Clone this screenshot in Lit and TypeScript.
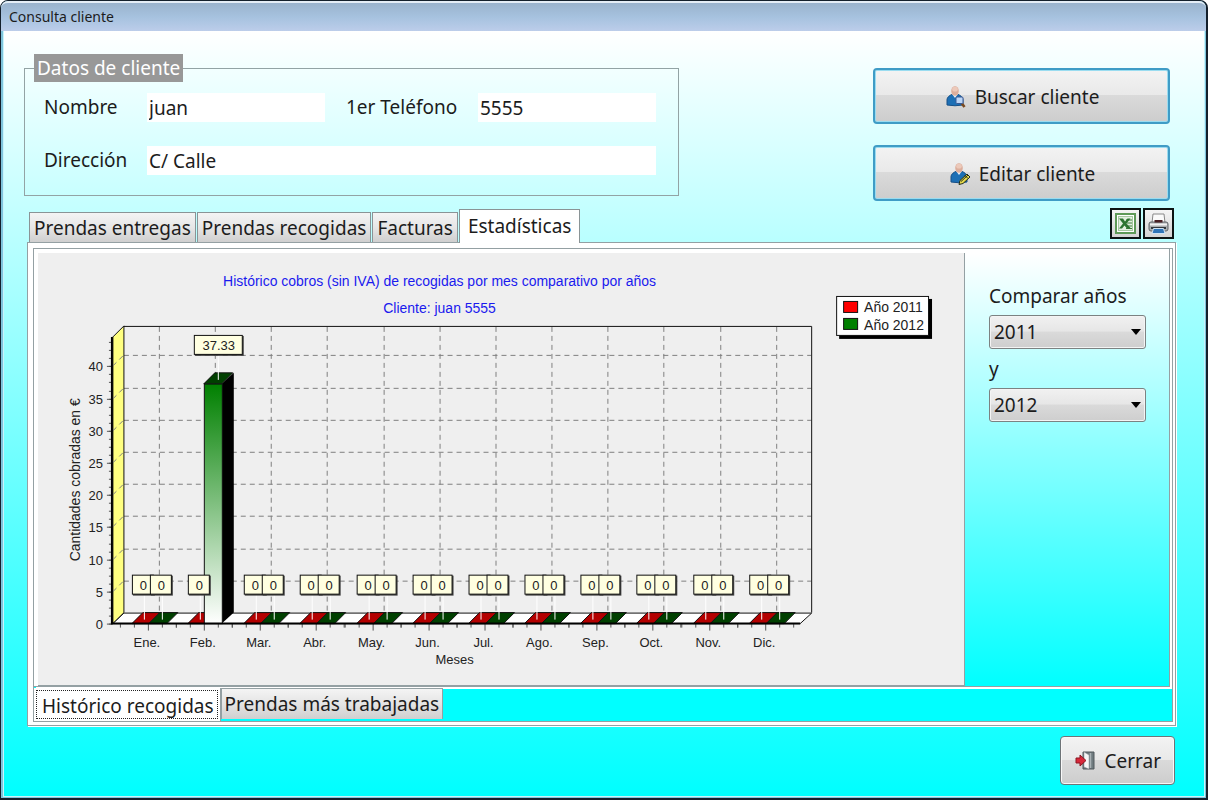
import { LitElement, html, css, svg } from "lit";
import { customElement, state } from "lit/decorators.js";

const MONTHS = ["Ene.", "Feb.", "Mar.", "Abr.", "May.", "Jun.", "Jul.", "Ago.", "Sep.", "Oct.", "Nov.", "Dic."];

interface Series {
  label: string;
  color: string;
  dark: string;
  values: number[];
}

const SERIES: Series[] = [
  { label: "Año 2011", color: "#ff0000", dark: "#b40000", values: MONTHS.map(() => 0) },
  { label: "Año 2012", color: "#008000", dark: "#004000", values: MONTHS.map((_, i) => (i === 1 ? 37.33 : 0)) },
];

@customElement("income-chart")
class IncomeChart extends LitElement {
  static styles = css`
    :host { display: block; background: #efefef; }
    svg { display: block; width: 100%; height: auto; }
    text { font-family: "Liberation Sans", Arial, sans-serif; font-size: 13px; fill: #222; }
    .title { fill: #1a1aee; font-size: 14px; }
    .large { font-size: 14px; }
    .mid { text-anchor: middle; }
    .end { text-anchor: end; }
    .axis { stroke: #000; stroke-width: 2; fill: none; }
    .edge { stroke: #111; fill: none; }
    .wall { fill: #ffff80; stroke: #111; }
    .floor { fill: #fff; stroke: #111; }
    .grid { stroke: #808080; stroke-dasharray: 5 4; fill: none; }
    .tick { stroke: #555; }
    .lead { stroke: #fff; stroke-width: 1; }
    .shadow { fill: #444; }
    .mark { fill: #ffffe1; stroke: #111; }
  `;

  private zeroY = 371;
  private depth = 11;

  private tickX(i: number) {
    return Math.round(110 + i * 56.16);
  }

  private valueY(v: number) {
    return Math.round(this.zeroY - v * 6.44);
  }

  private mark(x: number, y: number, w: number, label: string) {
    return svg`
      <rect class="shadow" x=${x + 1} y=${y + 1} width=${w + 1} height="20"></rect>
      <rect class="mark" x=${x + 0.5} y=${y + 0.5} width=${w} height="19"></rect>
      <text class="mid" x=${x + w / 2 + 1} y=${y + 15}>${label}</text>`;
  }

  private block(x: number, w: number, v: number, s: Series) {
    const top = this.valueY(v);
    const d = this.depth;
    const base = this.zeroY;
    return svg`
      ${v > 0
        ? svg`
          <polygon points="${x + w},${top} ${x + w + d + 1},${top - d} ${x + w + d + 1},${base - d} ${x + w},${base}" fill="#000"></polygon>
          <rect x=${x + 0.5} y=${top} width=${w} height=${base - top} fill="url(#bar)" stroke="#111"></rect>`
        : null}
      <polygon points="${x},${top} ${x + d},${top - d} ${x + w + d},${top - d} ${x + w},${top}"
        fill=${s.dark} stroke="#111"></polygon>`;
  }

  render() {
    const levels = [0, 5, 10, 15, 20, 25, 30, 35, 40];
    const minors = Array.from({ length: 36 }, (_, i) => i * 1.25);
    const d = this.depth;
    return html`
      <svg viewBox="0 0 927 432" role="img" aria-label="Histórico cobros">
        <defs>
          <linearGradient id="bar" x1="0" y1="0" x2="0" y2="1">
            <stop offset="0" stop-color="#008000"></stop>
            <stop offset="1" stop-color="#ffffff"></stop>
          </linearGradient>
        </defs>
        <text class="title mid" x="402" y="33">Histórico cobros (sin IVA) de recogidas por mes comparativo por años</text>
        <text class="title mid" x="402" y="60">Cliente: juan 5555</text>

        ${MONTHS.map((_, i) => svg`<path class="grid" d="M${this.tickX(i) + d + 0.5} 74V360"></path>`)}
        ${levels.slice(1).map((v) => svg`<path class="grid" d="M86 ${this.valueY(v) - d + 0.5}H774"></path>`)}
        <path class="edge" d="M86 73.5H774.5V360"></path>
        <polygon class="wall" points="75,84 86,73 86,360 75,371"></polygon>
        ${levels.slice(1).map((v) => svg`<path class="grid" d="M75 ${this.valueY(v)}l11 -11"></path>`)}
        <polygon class="floor" points="75,371 86,360.5 774.5,360.5 763,371"></polygon>

        ${minors.map((v) => svg`<path class="tick" d="M71 ${this.valueY(v) + 0.5}h3"></path>`)}
        ${levels.map((v) => svg`
          <path class="tick" d="M69 ${this.valueY(v) + 0.5}h6"></path>
          <text class="end" x="65" y=${this.valueY(v) + 5}>${v}</text>`)}
        ${MONTHS.map((m, i) => svg`
          ${[-28, -14, 14, 28].map((o) => svg`<path class="tick" d="M${this.tickX(i) + o + 0.5} 371v4"></path>`)}
          <path class="tick" d="M${this.tickX(i) + 0.5} 371v7"></path>
          <text class="mid" x=${this.tickX(i) - 1} y="394">${m}</text>`)}
        <path class="axis" d="M74 84V371"></path>

        ${MONTHS.map((_, i) => svg`
          ${this.block(this.tickX(i) - 16, 17, SERIES[0].values[i], SERIES[0])}
          ${this.block(this.tickX(i) + (i === 1 ? 0 : 1), 18, SERIES[1].values[i], SERIES[1])}`)}
        <path class="axis" d="M73 371H763"></path>

        ${MONTHS.map((_, i) => {
          const x = this.tickX(i);
          const v = SERIES[1].values[i];
          const top = this.valueY(v);
          return svg`
            <path class="lead" d="M${x - 3.5} 342v25"></path>
            ${this.mark(x - 16, 322, 21, "0")}
            <path class="lead" d="M${x + 14.5} ${top - 29}v25"></path>
            ${v > 0 ? this.mark(x - 10, 82, 48, String(v)) : this.mark(x + 2, 322, 21, "0")}`;
        })}

        <text class="mid" x="417" y="411">Meses</text>
        <text class="mid large" transform="translate(42 227) rotate(-90)">Cantidades cobradas en €</text>

        <rect x="802" y="46" width="93" height="40" fill="#000"></rect>
        <rect x="799.5" y="43.5" width="92" height="39" fill="#fff" stroke="#111"></rect>
        ${SERIES.map((s, i) => svg`
          <rect x="806.5" y=${48.5 + i * 17} width="14" height="11" fill=${s.color} stroke="#111"></rect>
          <text class="large" x="827" y=${59 + i * 18}>${s.label}</text>`)}
      </svg>
    `;
  }
}

const person = svg`
  <path d="M1 19v-5c0-3 3-5 6-6h4c3 1 6 3 6 6v5q-8 1.500-16 0z" fill="#1c6fb5" stroke="#174f86" stroke-width="1"></path>
  <path d="M6 8l3 4 3-4z" fill="#e8f0f8"></path>
  <ellipse cx="9" cy="5" rx="3.800" ry="4.800" fill="#dcae9c"></ellipse>
  <ellipse cx="9" cy="3.200" rx="2.800" ry="2.400" fill="#ecc9ba"></ellipse>`;

@customElement("app-root")
class AppRoot extends LitElement {
  @state() private tab = 3;
  @state() private chartTab = 0;

  static styles = css`
    :host {
      display: block;
      font-family: "Noto Sans", Tahoma, sans-serif;
      font-size: 19px;
      line-height: 28px;
      color: #1c1c1c;
    }
    * { box-sizing: border-box; }
    button, input, select { font: inherit; color: inherit; margin: 0; }
    .window {
      min-height: 100vh;
      display: flex;
      flex-direction: column;
      background: #7fc4dc;
      border: 1px solid #14202c;
      border-width: 1px 2px 2px 1px;
      border-radius: 8px 8px 0 0;
      padding: 0 1px 1px 2px;
    }
    .titlebar {
      height: 30px;
      margin: 0 -1px 0 -2px;
      padding: 0 8px;
      display: flex;
      align-items: center;
      background: linear-gradient(#9ab3cd, #a6c2df 50%, #bccdea);
      border-top: 2px solid #e4edf6;
      border-radius: 7px 7px 0 0;
      font-size: 14px;
    }
    .titlebar h1 { font: inherit; margin: 0; }
    .body {
      flex: 1;
      display: flex;
      flex-direction: column;
      padding: 23px 28px 11px 23px;
      border: 1px solid #c8f4fb;
      border-top: 0;
      background: linear-gradient(#fff, #00ffff);
    }
    .top { display: flex; justify-content: space-between; align-items: flex-start; padding: 0 6px 0 0; margin-left: -3px; }
    .client {
      flex: 0 1 655px;
      min-width: 0;
      margin: 0;
      padding: 11px 22px 20px 19px;
      border: 1px solid #93a3a5;
      display: grid;
      grid-template-columns: 103px 1fr 153px 1fr;
      row-gap: 24px;
      align-content: start;
    }
    .client legend { margin-left: -10px; padding: 0 3px; background: #989898; color: #fff; }
    .client label { line-height: 29px; }
    .client label.second { padding-left: 21px; }
    .client input { width: 100%; min-width: 0; height: 29px; border: 0; padding: 0 2px; background: #fff; outline: none; }
    .client .wide { grid-column: 2 / 5; }
    .actions { flex: 0 1 297px; display: flex; flex-direction: column; gap: 21px; padding-top: 14px; }
    .btn {
      display: flex;
      align-items: center;
      justify-content: center;
      gap: 9px;
      height: 56px;
      padding: 1px 10px 0 12px;
      border: 2px solid #3f9cc6;
      border-radius: 4px;
      background: linear-gradient(#f3f3f3, #e9e9e9 48%, #dadada 49%, #cdcdcd);
      box-shadow: inset 0 0 0 1px #9adcf0;
    }
    .btn.close { height: 49px; border: 1px solid #6e7478; box-shadow: inset 0 0 0 1px #f8f8f8; padding: 0 13px 0 14px; }
    .tabrow { display: flex; justify-content: space-between; align-items: flex-end; height: 46px; padding: 0 2px; margin-top: -5px; }
    .tabs { display: flex; align-items: flex-end; gap: 1px; }
    .tab {
      height: 30px;
      padding: 0 4px;
      border: 1px solid #8a9496;
      border-bottom: 0;
      background: linear-gradient(#f4f4f4, #e6e6e6 50%, #cfcfcf);
      white-space: nowrap;
      line-height: 28px;
    }
    .tab.on { height: 34px; padding: 0 8px 2px; margin-bottom: -1px; background: #fff; z-index: 1; }
    .tools { display: flex; gap: 2px; padding-bottom: 3px; }
    .tool { width: 31px; height: 31px; padding: 0; border: 2px solid #0c1414; background: linear-gradient(#f5f5f5, #d4d4d4); display: grid; place-items: center; }
    .panel { flex: 1; display: flex; border: 1px solid #94a0a3; background: #fff; padding: 5px 2px 3px 5px; box-shadow: 1px 1px #fff; }
    .inner { flex: 1; min-width: 0; display: flex; flex-direction: column; border: 1px solid #94a0a3; background: #00ffff; }
    .page {
      flex: 1;
      display: flex;
      margin-right: 2px;
      padding: 4px 0 0 4px;
      background: #fff;
      border-right: 1px solid #94a0a3;
      border-bottom: 1px solid #94a0a3;
      box-shadow: 2px 0 #fff, 2px 2px #fff;
    }
    .chart { flex: 1 1 0; min-width: 0; border-right: 1px solid #94a0a3; border-bottom: 1px solid #94a0a3; }
    .side {
      flex: 0 0 204px;
      padding: 28px 23px 0 24px;
      display: flex;
      flex-direction: column;
      background: linear-gradient(#fff, #00ffff);
    }
    .side label { line-height: 30px; }
    .select { display: grid; align-items: center; margin: 4px 0 5px; }
    .select select, .select svg { grid-area: 1 / 1; }
    .select select {
      appearance: none;
      height: 34px;
      padding: 0 4px;
      border: 1px solid #7c8282;
      border-radius: 3px;
      background: linear-gradient(#f1f1f1, #e6e6e6 48%, #dadada 49%, #cecece);
      box-shadow: inset 0 0 0 1px #f4f4f4;
    }
    .select svg { justify-self: end; margin-right: 5px; pointer-events: none; }
    .subtabs { display: flex; align-items: flex-start; height: 34px; padding-top: 1px; }
    .subtab { height: 31px; padding: 0 3px; border: 1px solid #94a0a3; border-width: 1px 1px 0 1px; background: linear-gradient(#f4f4f4, #e4e4e4 50%, #cfcfcf); line-height: 28px; white-space: nowrap; }
    .subtab.on { height: 33px; padding: 2px; border: 0; border-right: 1px solid #94a0a3; background: #fff; }
    .subtab.on span { display: block; height: 29px; border: 1px dotted #222; padding: 0 3px 0 5px; line-height: 30px; }
    .foot { display: flex; justify-content: flex-end; padding: 10px 1px 0 0; }
  `;

  private tabButtons() {
    return ["Prendas entregas", "Prendas recogidas", "Facturas", "Estadísticas"].map(
      (t, i) => html`<button class="tab ${this.tab === i ? "on" : ""}" role="tab" aria-selected=${this.tab === i}
        @click=${() => (this.tab = i)}>${t}</button>`
    );
  }

  private yearSelect(id: string, year: string) {
    return html`
      <div class="select">
        <select id=${id}>
          ${["2011", "2012"].map((y) => html`<option ?selected=${y === year}>${y}</option>`)}
        </select>
        <svg width="10" height="6" viewBox="0 0 10 6"><path d="M0 0h10L5 6z" fill="#000"></path></svg>
      </div>`;
  }

  render() {
    return html`
      <main class="window">
        <header class="titlebar"><h1>Consulta cliente</h1></header>
        <div class="body">
          <div class="top">
            <fieldset class="client">
              <legend>Datos de cliente</legend>
              <label for="name">Nombre</label>
              <input id="name" value="juan" />
              <label class="second" for="phone">1er Teléfono</label>
              <input id="phone" value="5555" />
              <label for="address">Dirección</label>
              <input id="address" class="wide" value="C/ Calle" />
            </fieldset>
            <div class="actions">
              <button class="btn">
                <svg width="20" height="22" viewBox="0 0 20 22">
                  ${person}
                  <path d="M15.500 17l3 4" stroke="#7a4a20" stroke-width="2.600"></path>
                  <rect x="10" y="11" width="7" height="6.500" rx="1" fill="#bcd6f6" stroke="#3c5a94"></rect>
                </svg>
                Buscar cliente
              </button>
              <button class="btn">
                <svg width="20" height="22" viewBox="0 0 20 22">
                  ${person}
                  <path d="M9 21.500l1-4 7-6.500 3 3-7 6.500z" fill="#e6d84a" stroke="#26301a"></path>
                  <path d="M11 18.500l7-6.500M15 12.500l3 3" stroke="#26301a"></path>
                </svg>
                Editar cliente
              </button>
            </div>
          </div>

          <div class="tabrow">
            <div class="tabs" role="tablist">${this.tabButtons()}</div>
            <div class="tools">
              <button class="tool" aria-label="Exportar a Excel">
                <svg width="21" height="21" viewBox="0 0 21 21">
                  <rect x="1" y="1" width="19" height="19" fill="#fff" stroke="#5f9a58" stroke-width="2"></rect>
                  <rect x="3.500" y="3.500" width="14" height="14" fill="#e2efdf" stroke="#a8c9a2"></rect>
                  <path d="M11 7h6M12 10h5M11 13h6M11 15.500h6" stroke="#3e7f3c"></path>
                  <path d="M4 5.500h4l2 3 2.500-3h3l-4 5 4.500 5h-4l-2.500-3-2.500 3H4l4-5z" fill="#2c7430"></path>
                </svg>
              </button>
              <button class="tool" aria-label="Imprimir">
                <svg width="21" height="22" viewBox="0 0 21 22">
                  <path d="M5 1h11l1 9H4z" fill="#fafafa" stroke="#888"></path>
                  <path d="M1 11q0-2 2-2h15q2 0 2 2v5q0 2-2 2H3q-2 0-2-2z" fill="#a9adb0" stroke="#606468"></path>
                  <path d="M6.500 7h8v2.500h-8z" fill="#4a2024"></path>
                  <path d="M2 11.500h17" stroke="#f2f2f2" stroke-width="2"></path>
                  <path d="M3 15h15" stroke="#33383c" stroke-width="2"></path>
                  <path d="M5.500 15.500h10l1.500 5H4z" fill="#2f74b8" stroke="#cfe2f2"></path>
                </svg>
              </button>
            </div>
          </div>

          <section class="panel">
            <div class="inner">
              <div class="page">
                <income-chart class="chart"></income-chart>
                <div class="side">
                  <label for="year-a">Comparar años</label>
                  ${this.yearSelect("year-a", "2011")}
                  <label for="year-b">y</label>
                  ${this.yearSelect("year-b", "2012")}
                </div>
              </div>
              <div class="subtabs" role="tablist">
                ${["Histórico recogidas", "Prendas más trabajadas"].map(
                  (t, i) => html`<button class="subtab ${this.chartTab === i ? "on" : ""}" role="tab"
                    aria-selected=${this.chartTab === i} @click=${() => (this.chartTab = i)}><span>${t}</span></button>`
                )}
              </div>
            </div>
          </section>

          <footer class="foot">
            <button class="btn close">
              <svg width="20" height="19" viewBox="0 0 20 19">
                <path d="M8 1h11v17H8z" fill="#707c80" stroke="#50585c"></path>
                <path d="M9 1l5 3v14l-5-2z" fill="#f6f6f6" stroke="#8a9094" stroke-width="0.500"></path>
                <path d="M15.500 2v15" stroke="#a9b2b5" stroke-width="1.500"></path>
                <path d="M1 7h4V4l6 5.500L5 15v-3H1z" fill="#d8283a" stroke="#8c1622"></path>
              </svg>
              Cerrar
            </button>
          </footer>
        </div>
      </main>
    `;
  }
}
